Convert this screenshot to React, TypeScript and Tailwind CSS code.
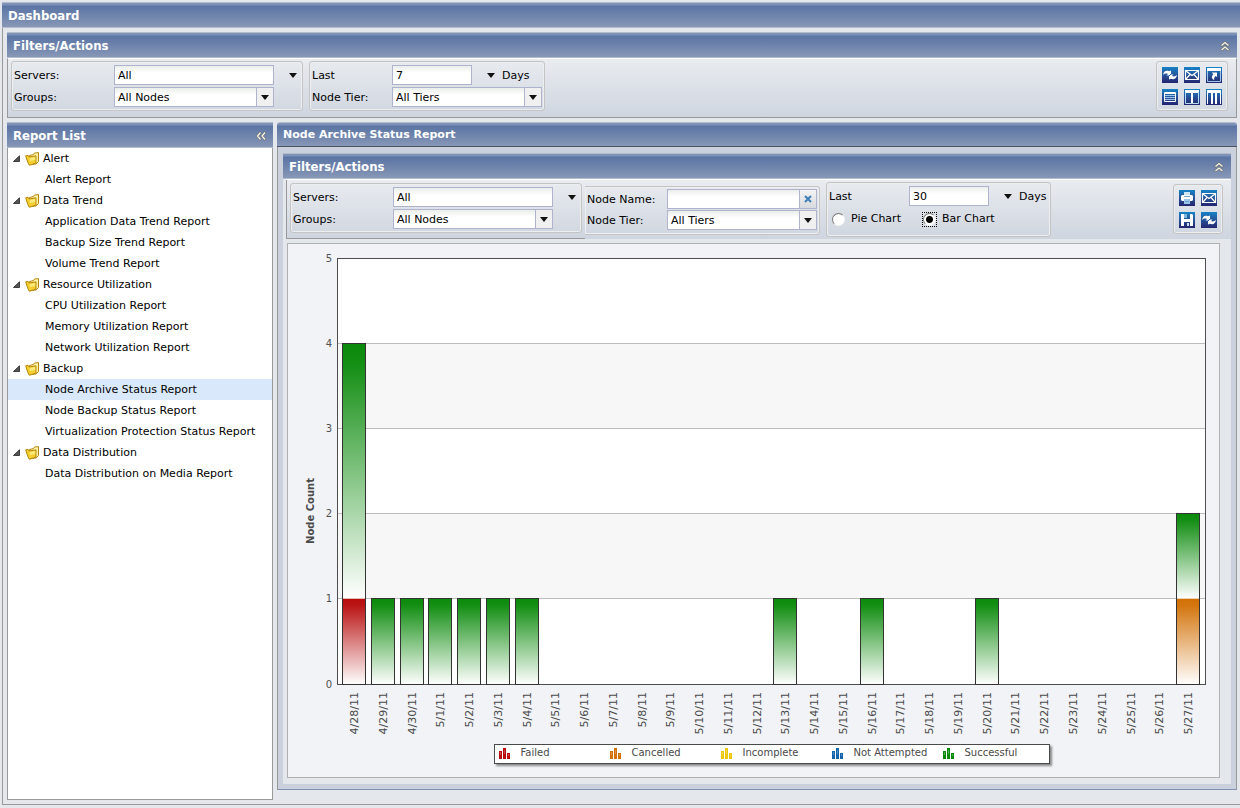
import { useId, useState, type ReactNode } from "react";
import clsx from "clsx";

const reportTree = [
  { name: "Alert", reports: ["Alert Report"] },
  {
    name: "Data Trend",
    reports: ["Application Data Trend Report", "Backup Size Trend Report", "Volume Trend Report"],
  },
  {
    name: "Resource Utilization",
    reports: ["CPU Utilization Report", "Memory Utilization Report", "Network Utilization Report"],
  },
  {
    name: "Backup",
    reports: [
      "Node Archive Status Report",
      "Node Backup Status Report",
      "Virtualization Protection Status Report",
    ],
  },
  { name: "Data Distribution", reports: ["Data Distribution on Media Report"] },
];

type Status = "failed" | "cancelled" | "incomplete" | "notAttempted" | "successful";

const statuses: { key: Status; label: string; color: string }[] = [
  { key: "failed", label: "Failed", color: "#b80c0c" },
  { key: "cancelled", label: "Cancelled", color: "#d27005" },
  { key: "incomplete", label: "Incomplete", color: "#edc80a" },
  { key: "notAttempted", label: "Not Attempted", color: "#1464ac" },
  { key: "successful", label: "Successful", color: "#0a8a0a" },
];

const days = [
  "4/28/11", "4/29/11", "4/30/11", "5/1/11", "5/2/11", "5/3/11", "5/4/11", "5/5/11", "5/6/11", "5/7/11",
  "5/8/11", "5/9/11", "5/10/11", "5/11/11", "5/12/11", "5/13/11", "5/14/11", "5/15/11", "5/16/11", "5/17/11",
  "5/18/11", "5/19/11", "5/20/11", "5/21/11", "5/22/11", "5/23/11", "5/24/11", "5/25/11", "5/26/11", "5/27/11",
];

const counts: Record<string, Partial<Record<Status, number>>> = {
  "4/28/11": { failed: 1, successful: 3 },
  "4/29/11": { successful: 1 },
  "4/30/11": { successful: 1 },
  "5/1/11": { successful: 1 },
  "5/2/11": { successful: 1 },
  "5/3/11": { successful: 1 },
  "5/4/11": { successful: 1 },
  "5/13/11": { successful: 1 },
  "5/16/11": { successful: 1 },
  "5/20/11": { successful: 1 },
  "5/27/11": { cancelled: 1, successful: 1 },
};

/* ---------- icons ---------- */

const glyphs = {
  refresh: (
    <>
      <path d="M1 8C1.500 4.500 4 3 7 4.200L9 3.500V8.500H4.500L6 7C4.500 6.300 2.500 6.500 1 8Z" fill="#fff" />
      <path d="M15 8C14.500 11.500 12 13 9 11.800L7 12.500V7.500H11.500L10 9C11.500 9.700 13.500 9.500 15 8Z" fill="#fff" />
      <path d="M6.500 9.500 9.500 6.500" stroke="#1b5ea6" />
    </>
  ),
  mail: (
    <g fill="none" stroke="#fff" strokeWidth="1.200">
      <path d="M1.500 3.500h13v9h-13z" />
      <path d="m2 4 6 4.500L14 4M2 12l4-4.500M14 12l-4-4.500" />
    </g>
  ),
  gadget: (
    <>
      <path d="M1.500 2v12.500h13V2" fill="none" stroke="#9cc7e8" />
      <path d="M1 1h14v3H1z" fill="#fff" />
      <path d="M6 5.500h5v4.500L9.500 9C8.500 10 8 11 8.200 13 5.500 12 5.300 9.500 7.200 7.500Z" fill="#fff" />
    </>
  ),
  oneColumn: (
    <>
      <path d="M2.500 3.500h11v9h-11z" fill="none" stroke="#fff" />
      <path d="M3 6.500h10M3 8.500h10M3 10.500h10" stroke="#9cc7e8" />
      <path d="M3 3h10v2H3z" fill="#fff" />
    </>
  ),
  twoColumns: (
    <>
      <path d="M1 1h14v3H1zM7 3h2v11H7z" fill="#fff" />
      <path d="M1.500 3v11.500h13V3" stroke="#b7dcf5" fill="none" />
    </>
  ),
  threeColumns: (
    <>
      <path d="M1 1h14v3H1zM1 3h1v12H1zM5 3h2v12H5zM9 3h2v12H9zM14 3h1v12h-1z" fill="#fff" />
    </>
  ),
  print: (
    <>
      <path d="M5 2h6v4H5z" fill="#cfe6f7" />
      <path d="M3 5h10l1 1v4l-1 1h-2V9H5v2H3l-1-1V6z" fill="#fff" />
      <path d="M5 9h6v5H5z" fill="#9cc7e8" />
      <path d="M5 6.500h6M6 11.500h4" stroke="#6fa3d0" />
    </>
  ),
  save: (
    <>
      <path d="M2 2h3v5h6V2h2l1 1v11h-3v-4H5v4H2z" fill="#fff" />
      <path d="M4 7h8v3H4z" fill="#fff" />
      <path d="M5 2h3v4H5z" fill="#7fb4dd" />
      <path d="M8 11h2v3H8z" fill="#c9def0" />
    </>
  ),
};

function ActionButton({ icon, label }: { icon: keyof typeof glyphs; label: string }) {
  return (
    <button
      type="button"
      aria-label={label}
      className="size-4 bg-gradient-to-b from-[#1283c6] to-[#23246f]"
    >
      <svg viewBox="0 0 16 16" className="block size-4">
        {glyphs[icon]}
      </svg>
    </button>
  );
}

function DownArrow({ className }: { className?: string }) {
  return (
    <svg viewBox="0 0 8 5" className={clsx("h-[5px] w-2 shrink-0", className)}>
      <path d="M0 0h8L4 5z" fill="#111" />
    </svg>
  );
}

function DoubleChevron({ direction, label }: { direction: "up" | "left"; label: string }) {
  return (
    <button type="button" aria-label={label} className="flex size-3 items-center justify-center">
      <svg
        viewBox="0 0 10 10"
        className={clsx("size-[10px]", direction === "left" && "-rotate-90")}
        fill="none"
      >
        <path d="M1 5 5 1.500 9 5M1 9.500 5 6 9 9.500" stroke="#6b6450" strokeWidth="2.500" opacity=".6" />
        <path d="M1.500 4.500 5 1.500 8.500 4.500M1.500 9 5 6 8.500 9" stroke="#f8f5e6" strokeWidth="1.300" />
      </svg>
    </button>
  );
}

function FolderIcon() {
  return (
    <svg viewBox="0 0 15 14" className="h-[14px] w-[15px] shrink-0">
      <path d="M4.500 3.500 8.500 2.500 9.500 1 13.500 .6V9.500L11 12 4 12.500z" fill="#fff3a8" stroke="#b5860f" />
      <path d="M.7 3.800 3 3.300 4.200 5 11 3.800V11L4.500 13.300 2.800 10.500z" fill="#f5cf30" stroke="#b5860f" />
      <path d="M4.800 6 10.200 5V8L5 9z" fill="#fdea7c" />
    </svg>
  );
}

/* ---------- panel parts ---------- */

function PanelHeader({
  title,
  compact,
  children,
}: {
  title: string;
  compact?: boolean;
  children?: ReactNode;
}) {
  return (
    <div
      className={clsx(
        "flex items-center justify-between border-t border-b border-t-[#b3bccd] bg-[linear-gradient(#8093b8_0,#7d91b7_2px,#5a74a4_3px,#8797b6_100%)] px-[6px] font-bold text-white",
        compact
          ? "h-[25px] rounded-t-[3px] border-b-[#4c5262] text-[11px]"
          : "h-[26px] border-b-[#b3bccd] pt-px font-['DejaVu_Sans_Condensed','DejaVu_Sans',sans-serif] text-[13px]",
      )}
    >
      <h2>{title}</h2>
      {children}
    </div>
  );
}

function GroupBox({ className, children }: { className?: string; children: ReactNode }) {
  return (
    <div
      className={clsx(
        "rounded-[3px] border border-[#c4c4c4] shadow-[inset_0_0_0_1px_#eceef0]",
        className,
      )}
    >
      {children}
    </div>
  );
}

const fieldClass =
  "h-5 border border-[#b0b3cd] bg-[linear-gradient(#eaeeea,#fff_7px)] px-[3px] pt-px text-[11px] text-black outline-none";

function TextField({
  label,
  value,
  labelClass,
  inputClass,
  children,
}: {
  label: string;
  value: string;
  labelClass: string;
  inputClass: string;
  children?: ReactNode;
}) {
  const id = useId();
  return (
    <div className="flex h-5 items-center">
      <label htmlFor={id} className={clsx("shrink-0 pt-px", labelClass)}>
        {label}
      </label>
      <input id={id} type="text" defaultValue={value} className={clsx(fieldClass, inputClass)} />
      {children}
    </div>
  );
}

function SelectField({
  label,
  value,
  labelClass,
  selectClass,
}: {
  label: string;
  value: string;
  labelClass: string;
  selectClass: string;
}) {
  const id = useId();
  return (
    <div className="flex h-5 items-center">
      <label htmlFor={id} className={clsx("shrink-0 pt-px", labelClass)}>
        {label}
      </label>
      <div className="relative flex">
        <select id={id} className={clsx(fieldClass, "appearance-none", selectClass)}>
          <option>{value}</option>
        </select>
        <span className="pointer-events-none absolute inset-y-px right-px flex w-[17px] items-center justify-center border-l border-[#b0b3cd] bg-[#f0f0f0]">
          <DownArrow />
        </span>
      </div>
    </div>
  );
}

function MenuArrow({ label, className }: { label: string; className: string }) {
  return (
    <button type="button" aria-label={label} className={className}>
      <DownArrow />
    </button>
  );
}

function ServerFilters() {
  return (
    <GroupBox className="flex flex-col gap-[2px] py-[3px] pr-[5px] pl-[2px]">
      <TextField label="Servers:" value="All" labelClass="w-[100px]" inputClass="w-[160px]">
        <MenuArrow label="Choose servers" className="ml-[15px]" />
      </TextField>
      <SelectField label="Groups:" value="All Nodes" labelClass="w-[100px]" selectClass="w-[160px]" />
    </GroupBox>
  );
}

function DaysField({ value }: { value: string }) {
  return (
    <TextField label="Last" value={value} labelClass="w-20" inputClass="w-20">
      <MenuArrow label="Choose number of days" className="ml-[15px]" />
      <span className="ml-[7px] pt-px">Days</span>
    </TextField>
  );
}

function ChartTypeRadio({
  label,
  checked,
  onSelect,
}: {
  label: string;
  checked: boolean;
  onSelect: () => void;
}) {
  return (
    <label className="flex items-center gap-[5px]">
      <span className={clsx("flex size-[15px] items-center justify-center", checked && "border border-dotted border-black")}>
        <input
          type="radio"
          name="chart-type"
          checked={checked}
          onChange={onSelect}
          className="size-[13px] shrink-0 appearance-none rounded-full border border-[#f4f4f4] border-t-[#777] border-l-[#777] bg-white checked:bg-[radial-gradient(circle,#000_3px,#fff_4px)]"
        />
      </span>
      {label}
    </label>
  );
}

/* ---------- chart ---------- */

const plot = { left: 49, top: 14, width: 868, height: 426, max: 5 };
const firstBar = 54;
const barStep = 28.76;
const barWidth = 23;

const yFor = (count: number) =>
  Math.floor(plot.top + plot.height - (count * plot.height) / plot.max) + 0.5;

function Bar({ index, day }: { index: number; day: string }) {
  const x = Math.round(firstBar + index * barStep) + 0.5;
  let total = 0;
  const segments = statuses.flatMap(({ key }) => {
    const count = counts[day]?.[key];
    if (!count) return [];
    const bottom = yFor(total);
    total += count;
    const top = yFor(total);
    return [{ key, top, height: bottom - top }];
  });
  if (total === 0) return null;

  return (
    <g>
      {segments.map((s) => (
        <g key={s.key}>
          <rect x={x} y={s.top} width={barWidth} height={s.height} fill="#fff" />
          <rect x={x} y={s.top} width={barWidth} height={s.height} fill={`url(#fill-${s.key})`} />
        </g>
      ))}
      <rect
        x={x}
        y={yFor(total)}
        width={barWidth}
        height={yFor(0) - yFor(total)}
        fill="none"
        stroke="#333"
      />
    </g>
  );
}

function BarChart() {
  const levels = [0, 1, 2, 3, 4, 5];
  return (
    <svg viewBox="0 0 931 500" className="block w-full" role="img" aria-label="Node count by day">
      <defs>
        {statuses.map((s) => (
          <linearGradient key={s.key} id={`fill-${s.key}`} x1="0" y1="0" x2="0" y2="1">
            <stop offset="0" stopColor={s.color} />
            <stop offset=".08" stopColor={s.color} stopOpacity=".96" />
            <stop offset="1" stopColor={s.color} stopOpacity="0" />
          </linearGradient>
        ))}
      </defs>
      <rect x={plot.left} y={plot.top} width={plot.width} height={plot.height} fill="#fff" />
      {[1, 3].map((n) => (
        <rect
          key={n}
          x={plot.left}
          y={yFor(n + 1)}
          width={plot.width}
          height={yFor(n) - yFor(n + 1)}
          fill="#f7f7f7"
        />
      ))}
      {levels.map((n) => (
        <g key={n}>
          <path d={`M${plot.left} ${yFor(n)}h${plot.width}`} stroke="#bdbdbd" />
          <text x="44" y={yFor(n) + 3.5} textAnchor="end" fontSize="10" fill="#505050">
            {n}
          </text>
        </g>
      ))}
      <rect
        x={plot.left + 0.5}
        y={plot.top + 0.5}
        width={plot.width}
        height={plot.height}
        fill="none"
        stroke="#4d4d4d"
      />
      {days.map((day, i) => (
        <g key={day}>
          <Bar index={i} day={day} />
          <text
            transform={`translate(${Math.round(firstBar + i * barStep) + 16} 448) rotate(-90)`}
            textAnchor="end"
            fontSize="11"
            fill="#4a4a4a"
          >
            {day}
          </text>
        </g>
      ))}
      <text
        transform="translate(26 267) rotate(-90)"
        textAnchor="middle"
        fontSize="10"
        fontWeight="bold"
        fill="#4a4a4a"
      >
        Node Count
      </text>
    </svg>
  );
}

function Legend() {
  return (
    <ul className="grid h-5 w-[556px] grid-cols-[111px_111px_111px_111px_1fr] border border-[#4a4a4a] bg-white text-[10px] leading-4 text-[#4a4a4a] shadow-[2px_2px_2px_#8a8a8a]">
      {statuses.map((s) => (
        <li key={s.key} className="flex gap-[10px] pl-1">
          <svg viewBox="0 0 12 12" className="mt-[2px] size-3 shrink-0" fill={s.color}>
            <path d="M0 4h3v8H0zM4 1h3v11H4zM8 6h3v6H8z" />
            <path d="M1 5h1v3H1zM5 3h1v4H5zM9 7h1v2H9z" fill="#fff" opacity=".25" />
          </svg>
          {s.label}
        </li>
      ))}
    </ul>
  );
}

/* ---------- page ---------- */

function ReportList({ selected, onSelect }: { selected: string; onSelect: (name: string) => void }) {
  return (
    <aside className="flex w-[266px] shrink-0 flex-col">
      <PanelHeader title="Report List">
        <DoubleChevron direction="left" label="Collapse report list" />
      </PanelHeader>
      <nav className="flex-1 border-x border-b border-[#999] bg-white">
        {reportTree.map((group) => (
          <section key={group.name}>
            <h3 className="flex h-[21px] items-center pl-[5px]">
              <svg viewBox="0 0 7 7" className="mr-[5px] size-[7px]">
                <path d="M6.500 .8v5.700h-6z" fill="#555" stroke="#222" strokeWidth=".8" />
              </svg>
              <FolderIcon />
              <span className="ml-[3px]">{group.name}</span>
            </h3>
            <ul>
              {group.reports.map((name) => (
                <li key={name}>
                  <a
                    href="#"
                    onClick={() => onSelect(name)}
                    className={clsx(
                      "flex h-[21px] items-center pl-[37px] whitespace-nowrap",
                      name === selected && "bg-[#d9e8fb]",
                    )}
                  >
                    {name}
                  </a>
                </li>
              ))}
            </ul>
          </section>
        ))}
      </nav>
    </aside>
  );
}

const toolbarFill = "border-t border-t-white bg-gradient-to-b from-[#e9ecf0] to-[#cfd5df]";

export default function App() {
  const [selected, setSelected] = useState("Node Archive Status Report");
  const [chartType, setChartType] = useState<"pie" | "bar">("bar");
  const nodeNameId = useId();

  return (
    <div className="flex min-h-screen flex-col bg-[#e4e8ed] pt-[2px] pb-[3px] pl-[2px] font-['DejaVu_Sans',Verdana,sans-serif] text-[11px] leading-4 text-black">
      <PanelHeader title="Dashboard" />
      <div className="flex flex-1 flex-col gap-1 border-b border-l border-[#999] pt-1 pr-[3px] pb-1 pl-1">
        <div>
          <PanelHeader title="Filters/Actions">
            <DoubleChevron direction="up" label="Collapse filters" />
          </PanelHeader>
          <div
            className={clsx(
              "flex h-[60px] items-start gap-[6px] border-x border-b border-x-[#999] border-b-[#999] px-[3px] pt-[2px]",
              toolbarFill,
            )}
          >
            <ServerFilters />
            <GroupBox className="flex flex-col gap-[2px] px-[2px] py-[3px]">
              <DaysField value="7" />
              <SelectField label="Node Tier:" value="All Tiers" labelClass="w-20" selectClass="w-[150px]" />
            </GroupBox>
            <GroupBox className="mr-[5px] ml-auto grid grid-cols-3 gap-[6px] p-[5px]">
              <ActionButton icon="refresh" label="Refresh" />
              <ActionButton icon="mail" label="Email" />
              <ActionButton icon="gadget" label="Restore gadgets" />
              <ActionButton icon="oneColumn" label="One column" />
              <ActionButton icon="twoColumns" label="Two columns" />
              <ActionButton icon="threeColumns" label="Three columns" />
            </GroupBox>
          </div>
        </div>

        <div className="flex flex-1 gap-1">
          <ReportList selected={selected} onSelect={setSelected} />

          <main className="mb-[10px] flex min-w-0 flex-1 flex-col">
            <PanelHeader title="Node Archive Status Report" compact />
            <div className="flex flex-1 flex-col border-x border-b border-x-[#999] border-b-[#7f93b0] bg-[#cbd1dc] px-[5px] pt-[6px] pb-[5px]">
              <PanelHeader title="Filters/Actions">
                <DoubleChevron direction="up" label="Collapse report filters" />
              </PanelHeader>
              <div className="flex flex-1 flex-col gap-1 bg-[#e4e8ed] pb-[6px] pl-[3px]">
                <div className={clsx("flex h-[60px] items-start", toolbarFill)}>
                  <div className="h-[59px] border-b border-l border-[#999] px-[3px] pt-[3px]">
                    <ServerFilters />
                  </div>
                  <GroupBox className="mt-[6px] flex flex-col gap-px rounded-l-none border-l-0 px-[2px] pt-[2px] pb-1">
                    <div className="flex h-5 items-center">
                      <label htmlFor={nodeNameId} className="w-20 pt-px">
                        Node Name:
                      </label>
                      <input id={nodeNameId} type="text" className={clsx(fieldClass, "w-[133px]")} />
                      <button
                        type="button"
                        aria-label="Clear node name"
                        className="flex h-5 w-[17px] items-center justify-center border border-l-0 border-[#b0b3cd] bg-gradient-to-b from-[#f4f4f4] to-[#d8dade]"
                      >
                        <svg viewBox="0 0 8 8" className="size-2">
                          <path d="m1 1 6 6M7 1 1 7" stroke="#3f7fb8" strokeWidth="2" />
                        </svg>
                      </button>
                    </div>
                    <SelectField label="Node Tier:" value="All Tiers" labelClass="w-20" selectClass="w-[150px]" />
                  </GroupBox>
                  <GroupBox className="mt-[2px] ml-[6px] flex flex-col gap-[3px] pt-[3px] pr-1 pb-[7px] pl-[2px]">
                    <DaysField value="30" />
                    <div className="flex h-5 items-center gap-[21px] pl-[2px]">
                      <ChartTypeRadio
                        label="Pie Chart"
                        checked={chartType === "pie"}
                        onSelect={() => setChartType("pie")}
                      />
                      <ChartTypeRadio
                        label="Bar Chart"
                        checked={chartType === "bar"}
                        onSelect={() => setChartType("bar")}
                      />
                    </div>
                  </GroupBox>
                  <GroupBox className="mt-1 mr-2 ml-auto grid grid-cols-2 gap-[6px] p-[5px]">
                    <ActionButton icon="print" label="Print" />
                    <ActionButton icon="mail" label="Email" />
                    <ActionButton icon="save" label="Save" />
                    <ActionButton icon="refresh" label="Refresh" />
                  </GroupBox>
                </div>

                <div className="mr-[11px] ml-px flex flex-1 flex-col border border-[#b0b0b0] bg-[#f1f3f7]">
                  <BarChart />
                  <div className="flex flex-1 justify-center pl-9">
                    <Legend />
                  </div>
                </div>
              </div>
            </div>
          </main>
        </div>
      </div>
    </div>
  );
}
